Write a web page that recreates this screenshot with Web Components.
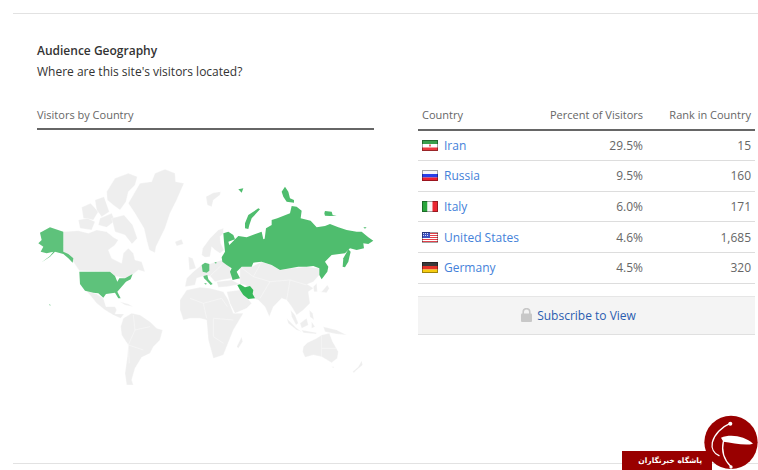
<!DOCTYPE html>
<html>
<head>
<meta charset="utf-8">
<title>Audience Geography</title>
<style>
  html, body { margin: 0; padding: 0; background: #fff; }
  body { width: 758px; height: 470px; overflow: hidden; position: relative; font-family: "Open Sans", sans-serif; }
</style>
</head>
<body>
<audience-page>
  <span slot="title">Audience Geography</span>
  <span slot="subtitle">Where are this site's visitors located?</span>
  <geo-map slot="map"></geo-map>
  <country-table slot="table"></country-table>
</audience-page>
<brand-badge></brand-badge>

<script>
// page frame: rules on top and bottom, two columns between
class AudiencePage extends HTMLElement {
  constructor() {
    super();
    this.attachShadow({mode: 'open'}).innerHTML = `
      <style>
        :host { display: block; height: 470px; padding: 13px 0 0 13px; box-sizing: border-box; color: #333; font-size: 12px; }
        .frame { height: 451px; border-top: 1px solid #e2e2e2; border-bottom: 1px solid #e2e2e2; box-sizing: border-box; padding: 29px 3px 0 24px; }
        h2 { margin: 0; font-size: 12px; line-height: 16px; font-weight: 600; color: #333; }
        p { margin: 4px 0 0; font-size: 12px; line-height: 17px; color: #333; }
        .cols { display: flex; justify-content: space-between; margin-top: 25px; }
        .left { width: 337px; }
        .right { width: 337px; }
        .label { height: 23px; line-height: 20px; font-size: 11px; color: #666; border-bottom: 2px solid #666; }
      </style>
      <div class="frame">
        <h2><slot name="title"></slot></h2>
        <p><slot name="subtitle"></slot></p>
        <div class="cols">
          <div class="left">
            <div class="label">Visitors by Country</div>
            <slot name="map"></slot>
          </div>
          <div class="right"><slot name="table"></slot></div>
        </div>
      </div>
    `;
  }
}
customElements.define('audience-page', AudiencePage);

// world map, shapes traced from the reference (two zoomed halves, 3x units)
class GeoMap extends HTMLElement {
  static WEST_GRAY = [
    '190,245 235,242 265,250 290,240 320,245 340,262 355,270 345,285 325,300 335,325 365,340 370,310 385,295 400,310 405,330 425,335 435,365 415,360 400,372 375,385 345,378 330,365 238,362 220,335 190,305',
    '320,125 345,85 385,70 412,80 405,105 385,125 378,155 360,180 340,165 322,150',
    '245,172 272,160 295,185 280,210 250,205',
    '285,150 312,140 328,185 305,200 290,180',
    '235,210 262,205 285,215 275,240 240,235',
    '300,205 335,190 345,212 320,232 295,225',
    '335,205 372,195 398,225 412,265 396,282 375,255 345,245',
    '385,160 420,100 455,95 465,70 495,58 525,70 527,95 552,100 530,150 510,190 495,235 468,290 465,308 448,300 440,270 432,235 405,190',
    '525,275 545,268 550,282 530,288',
    '258,422 290,432 310,445 318,470 345,470 350,480 345,492 372,492 362,505 340,495 315,480 290,460 270,435',
    '360,455 385,462 400,470 375,465',
    '362,530 370,505 395,490 420,495 450,515 470,535 488,540 480,570 460,590 450,610 425,622 405,655 395,690 400,705 380,705 375,670 382,620 385,585 365,555'
  ];
  static EAST_GRAY = [
    '-30,450 -10,420 30,412 60,415 100,425 115,450 130,490 160,490 130,540 112,585 100,615 70,625 55,570 50,510 30,505 0,505 -20,510 -30,480',
    '140,590 155,560 158,575 145,595',
    '35,315 38,295 60,265 85,240 100,235 100,250 90,260 92,280 102,300 90,310 75,300 65,290 60,320 45,322',
    '-10,385 10,365 35,345 58,342 95,330 120,350 125,385 95,390 75,395 60,378 40,378 20,385 15,405 -15,410',
    '-5,320 8,325 18,355 -2,360',
    '80,395 125,390 150,403 110,410 85,412',
    '110,425 150,420 185,460 170,475 135,490 120,460',
    '150,403 150,350 185,350 215,335 245,345 270,360 300,355 350,350 388,355 388,375 370,395 352,403 370,415 355,425 360,460 340,480 320,495 305,470 290,450 275,445 250,470 238,500 225,470 205,450 190,445 188,420 165,405',
    '302,480 315,495 325,520 318,525 305,500',
    '290,505 320,535 335,545 320,540 295,520',
    '330,520 350,505 355,525 335,535',
    '335,540 380,548 378,552 340,548',
    '365,515 375,530 365,535',
    '400,530 440,540 470,555 440,552 405,545',
    '358,480 368,490 372,510 360,500',
    '395,425 412,405 418,415 410,428 385,425',
    '370,410 380,400 382,425 372,425',
    '340,590 352,578 380,565 395,555 418,550 428,575 445,605 442,625 425,638 395,620 370,615 345,622 338,605',
    '425,650 432,650 430,655',
    '488,665 505,650 515,632 518,645 500,660 492,668',
    '48,140 70,128 92,125 90,135 70,150 65,170 52,165'
  ];
  // thin white country borders on the gray land
  static WEST_BORDERS = ['M400 495L405 540 385 585 388 640', 'M405 540L450 530', 'M385 585L430 600'];
  static EAST_BORDERS = [
    'M0 445L40 460 50 505', 'M40 460L95 445 112 470', 'M70 505L70 560 100 580', 'M70 505L130 510',
    'M210 445L240 395 300 390 350 405', 'M300 390L290 450', 'M190 380L240 395', 'M150 350L190 380 215 335',
    'M395 555L395 620', 'M395 595L440 595', 'M50 345L50 330', 'M95 345L60 378'
  ];
  static USA = [
    '120,248 150,232 190,245 190,305 205,312 220,325 218,338 205,325 190,312 165,305 150,320 125,337 150,318 160,305 140,310 122,305 130,290 115,280 125,270',
    '238,365 330,365 345,378 352,395 358,385 375,385 398,372 392,388 378,395 365,410 352,425 362,445 355,445 345,428 318,432 310,443 295,430 280,428 255,422 240,402',
    '147,462 152,465 150,467'
  ];
  static RUSSIA = [
    '100,250 115,245 130,255 135,268 115,275 118,285 145,258 170,262 215,245 220,268 224,266 228,235 245,225 245,210 262,205 300,190 305,168 320,170 335,182 332,205 362,212 380,232 405,228 420,222 445,232 470,240 500,245 515,245 535,262 550,272 535,282 520,280 522,295 500,300 480,295 465,310 425,315 405,335 415,350 412,365 395,388 388,375 388,355 370,348 350,350 325,350 300,355 270,360 245,345 215,335 190,338 185,350 155,350 140,365 150,385 128,390 120,365 125,355 110,345 97,335 95,322 105,305 102,275',
    '165,235 165,220 175,195 205,175 210,178 185,205 178,225 175,237',
    '275,125 285,110 295,125 300,145 312,150 312,158 290,155 280,140',
    '403,190 405,183 425,185 428,195 440,197 420,198 405,197',
    '145,118 160,115 155,128',
    '458,350 460,325 475,298 482,305 475,335 465,352',
    '520,232 530,232 525,236',
    '73,337 80,337 78,341'
  ];
  static GERMANY_ITALY = [
    '35,345 45,338 58,342 58,362 50,368 38,365',
    '40,378 52,375 55,388 68,402 62,405 50,392 42,385',
    '42,400 50,400 48,404'
  ];
  static IRAN = '142,405 150,403 165,412 180,408 190,420 188,432 195,445 175,447 160,435 150,420';

  constructor() {
    super();
    const poly = (list) => list.map(pts => `<polygon points="${ pts }"/>`).join('');
    const lines = (list) => list.map(d => `<path d="${ d }"/>`).join('');
    this.attachShadow({mode: 'open'}).innerHTML = `
      <style>
        :host { display: block; }
        svg { display: block; width: 337px; height: 260px; }
      </style>
      <svg viewBox="37 130 337 260">
        <g transform="translate(0 150) scale(.3333)">
          <g fill="#eee" stroke="#fff" stroke-width="1">${ poly(GeoMap.WEST_GRAY) }</g>
          <g fill="none" stroke="#fafafa" stroke-width="1.5">${ lines(GeoMap.WEST_BORDERS) }</g>
          <g fill="#5ec27b">${ poly(GeoMap.USA) }</g>
        </g>
        <g transform="translate(190 150) scale(.3333)">
          <g fill="#eee" stroke="#fff" stroke-width="1">${ poly(GeoMap.EAST_GRAY) }</g>
          <g fill="none" stroke="#fafafa" stroke-width="1.5">${ lines(GeoMap.EAST_BORDERS) }</g>
          <g fill="#4fbd6e">${ poly(GeoMap.RUSSIA) }</g>
          <g fill="#5ec27b">${ poly(GeoMap.GERMANY_ITALY) }</g>
          <polygon fill="#37b85a" points="${ GeoMap.IRAN }"/>
        </g>
      </svg>
    `;
  }
}
customElements.define('geo-map', GeoMap);

// 16x11 flag with a bevelled edge
class FlagIcon extends HTMLElement {
  static FLAGS = {
    ir: `<rect width="16" height="11" fill="#fff"/><rect width="16" height="4" fill="#3aa04c"/><rect y="7.5" width="16" height="3.5" fill="#ec3a40"/><rect x="7" y="4.5" width="2" height="2" fill="#e06a72"/>`,
    ru: `<rect width="16" height="4" fill="#f6f6fa"/><rect y="4" width="16" height="3.5" fill="#2a3fe8"/><rect y="7.5" width="16" height="3.5" fill="#ee2030"/>`,
    it: `<rect width="5.5" height="11" fill="#2aa53c"/><rect x="5.5" width="5" height="11" fill="#f8f8f8"/><rect x="10.5" width="5.5" height="11" fill="#ea2832"/>`,
    us: `<rect width="16" height="11" fill="#fff"/><path d="M0 1.5h16M0 3.5h16M0 5.5h16M0 7.5h16M0 9.5h16" stroke="#e2404a" stroke-width="1"/><rect width="8" height="6" fill="#3f52c0"/><path d="M1 1.5h6M1 3.5h6" stroke="#d4daf8" stroke-width="1" stroke-dasharray="1 1"/>`,
    de: `<rect width="16" height="4" fill="#3a3a3a"/><rect y="4" width="16" height="3.5" fill="#e4332a"/><rect y="7.5" width="16" height="3.5" fill="#f6cc10"/>`
  };
  constructor() {
    super();
    const code = this.getAttribute('code');
    this.attachShadow({mode: 'open'}).innerHTML = `
      <style>
        :host { display: block; width: 16px; height: 11px; }
        svg { display: block; }
      </style>
      <svg width="16" height="11" viewBox="0 0 16 11">
        ${ FlagIcon.FLAGS[code] }
        <rect x=".5" y=".5" width="15" height="10" fill="none" stroke="rgba(0,0,0,.35)"/>
      </svg>
    `;
  }
}
customElements.define('flag-icon', FlagIcon);

class CountryTable extends HTMLElement {
  static ROWS = [
    {code: 'ir', name: 'Iran', pct: '29.5%', rank: '15'},
    {code: 'ru', name: 'Russia', pct: '9.5%', rank: '160'},
    {code: 'it', name: 'Italy', pct: '6.0%', rank: '171'},
    {code: 'us', name: 'United States', pct: '4.6%', rank: '1,685'},
    {code: 'de', name: 'Germany', pct: '4.5%', rank: '320'}
  ];
  constructor() {
    super();
    const rows = CountryTable.ROWS.map(r => `
      <div class="row">
        <div class="country"><flag-icon code="${ r.code }"></flag-icon><a>${ r.name }</a></div>
        <div class="pct">${ r.pct }</div>
        <div class="rank">${ r.rank }</div>
      </div>`).join('');
    this.attachShadow({mode: 'open'}).innerHTML = `
      <style>
        :host { display: block; font-size: 12px; }
        .row, .head { display: grid; grid-template-columns: 1fr 110px 108px; align-items: center; padding: 0 4px; }
        .head { height: 23.6px; line-height: 20px; font-size: 11px; color: #666; border-bottom: 2px solid #666; align-items: start; }
        .row { height: 29.6px; border-bottom: 1px solid #ddd; color: #666; }
        .country { display: flex; align-items: center; gap: 6px; }
        a { color: #4481d9; }
        .pct, .rank { text-align: right; }
        .sub { margin-top: 12px; height: 37px; padding-right: 16px; background: #f4f4f4; border-top: 1px solid #e6e6e6; border-bottom: 1px solid #e0e0e0; display: flex; align-items: center; justify-content: center; gap: 5px; color: #2a5db0; }
        .sub svg { display: block; }
      </style>
      <div class="head"><div>Country</div><div class="pct">Percent of Visitors</div><div class="rank">Rank in Country</div></div>
      ${ rows }
      <div class="sub">
        <svg width="11" height="14" viewBox="0 0 11 14"><path d="M2.2 6V4a3.3 3.3 0 0 1 6.6 0v2" fill="none" stroke="#c8c8c8" stroke-width="1.6"/><rect y="5.5" width="11" height="8.5" rx="1" fill="#c8c8c8"/></svg>
        <span>Subscribe to View</span>
      </div>
    `;
  }
}
customElements.define('country-table', CountryTable);

// news agency logo pinned over the corner
class BrandBadge extends HTMLElement {
  constructor() {
    super();
    this.attachShadow({mode: 'open'}).innerHTML = `
      <style>
        :host { position: absolute; left: 622px; top: 405px; width: 136px; height: 65px; display: block; overflow: hidden; }
        .bar { position: absolute; left: 0; top: 46px; width: 90px; height: 19px; box-sizing: border-box; padding-right: 10px; background: #990000; color: #fff; font: bold 7.5px "DejaVu Sans", sans-serif; line-height: 19px; direction: rtl; text-align: right; white-space: nowrap; }
        svg { position: absolute; left: 73px; top: 0; }
      </style>
      <svg width="63" height="65" viewBox="0 0 189 195">
        <circle cx="108" cy="112" r="80" fill="#990000"/>
        <g fill="none" stroke="#fff" stroke-linecap="round">
          <path d="M104 56C80 66 58 88 52 112c-4 20 6 34 20 40" stroke-width="4"/>
          <path d="M85 110c-6 28 2 54 22 74" stroke-width="4"/>
        </g>
        <path d="M78 98C108 86 150 94 174 116 150 124 112 112 85 110Z" fill="#fff"/>
        <circle cx="106" cy="56" r="6" fill="#fff"/>
        <circle cx="108" cy="186" r="5" fill="#fff"/>
      </svg>
      <div class="bar">پاشگاه خبرنگاران</div>
    `;
  }
}
customElements.define('brand-badge', BrandBadge);
</script>
</body>
</html>
